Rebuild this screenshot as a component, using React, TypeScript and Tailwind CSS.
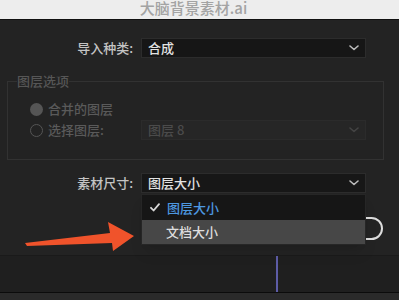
const font = { fontFamily: '"Noto Sans CJK SC", "Noto Sans", sans-serif' }

const Chevron = ({ className = '' }: { className?: string }) => (
    <svg className={className} width="10" height="6" viewBox="0 0 10 6" fill="none" stroke="currentColor" strokeWidth={1.6}>
        <path d="M1 1l4 3.5L9 1" strokeLinecap="round" strokeLinejoin="round" />
    </svg>
)

const App = () => {
    return (
        <div className="relative w-[399px] h-[300px] overflow-hidden bg-[#232323] text-[13px] font-medium" style={font}>
            {/* Title bar */}
            <div className="h-[19px] bg-[#ededed] flex justify-center">
                <div className="text-[15px] leading-[16px] text-[#a3a3a3] mr-[12px]">大脑背景素材.ai</div>
            </div>

            {/* Dialog */}
            <div className="border-t border-[#101010] bg-[#232323] pt-[18px] pb-[15px] border-b border-b-[#1a1a1a]">
                <div className="flex items-center h-[20px]">
                    <div className="w-[141px] pr-[8px] text-right text-[#c4c4c4]">导入种类:</div>
                    <div className="w-[225px] h-[20px] bg-[#161616] border border-[#2c2c2c] flex items-center justify-between pl-[6px] pr-[6px] text-[#e2e2e2]">
                        <span>合成</span>
                        <Chevron className="text-[#bdbdbd]" />
                    </div>
                </div>

                {/* Layer options */}
                <fieldset className="mx-[7px] mt-[16px] w-[377px] border border-[#323232] pb-[19px]">
                    <legend className="ml-[9px] text-[13px] leading-[14px] text-[#565656]">图层选项</legend>
                    <div className="flex items-center h-[20px] mt-[11px]">
                        <div className="w-[133px] flex items-center pl-[22px] gap-[5px] text-[#5a5a5a]">
                            <span className="w-[13px] h-[13px] rounded-full bg-[#555]" />
                            <span>合并的图层</span>
                        </div>
                    </div>
                    <div className="flex items-center h-[20px] mt-[1px]">
                        <div className="w-[133px] flex items-center pl-[22px] gap-[5px] text-[#5a5a5a]">
                            <span className="w-[13px] h-[13px] rounded-full border-[1.5px] border-[#555]" />
                            <span>选择图层:</span>
                        </div>
                        <div className="w-[225px] h-[20px] bg-[#262626] border border-[#2b2b2b] flex items-center justify-between px-[6px] text-[#4b4b4b]">
                            <span>图层 8</span>
                            <Chevron className="text-[#444]" />
                        </div>
                    </div>
                </fieldset>

                <div className="flex items-center h-[20px] mt-[13px]">
                    <div className="w-[141px] pr-[8px] text-right text-[#c4c4c4]">素材尺寸:</div>
                    <div className="w-[225px] h-[20px] bg-[#171717] border border-[#2c2c2c] flex items-center justify-between px-[6px] text-[#e2e2e2]">
                        <span>图层大小</span>
                        <Chevron className="text-[#bdbdbd]" />
                    </div>
                </div>

                <div className="flex justify-end pr-[16px] mt-[24px]">
                    <div className="w-[80px] h-[23px] rounded-full border-2 border-[#dcdcdc]" />
                </div>
            </div>

            {/* Timeline strip below */}
            <div className="h-[36px] bg-[#1f1f1f] flex">
                <div className="ml-[276px] w-[2px] h-full bg-[#5d5ca6]" />
            </div>
            <div className="h-px bg-[#0b0b0b]" />
            <div className="h-[10px] bg-[#2a2a2a]" />

            {/* Open dropdown menu */}
            <div className="absolute left-[141px] top-[194px] w-[225px] border border-[#262626] shadow-lg">
                <div className="h-[25px] bg-[#161616] flex items-center text-[#4d98e0]">
                    <svg className="ml-[8px] mr-[7px]" width="10" height="9" viewBox="0 0 10 9" fill="none" stroke="#d8d8d8" strokeWidth={1.8}>
                        <path d="M1 4.8l2.6 2.7L9 1.2" strokeLinecap="round" strokeLinejoin="round" />
                    </svg>
                    <span>图层大小</span>
                </div>
                <div className="h-[24px] bg-[#474747] flex items-center pl-[24px] text-[#dedede]">文档大小</div>
            </div>

            {/* Annotation arrow */}
            <svg className="absolute left-0 top-0 pointer-events-none" width="399" height="300" viewBox="0 0 399 300">
                <polygon points="25,243 110,233 108,222 134,236 113,251 112,243 27,246" fill="#f0532b" />
            </svg>
        </div>
    )
}

export default App
